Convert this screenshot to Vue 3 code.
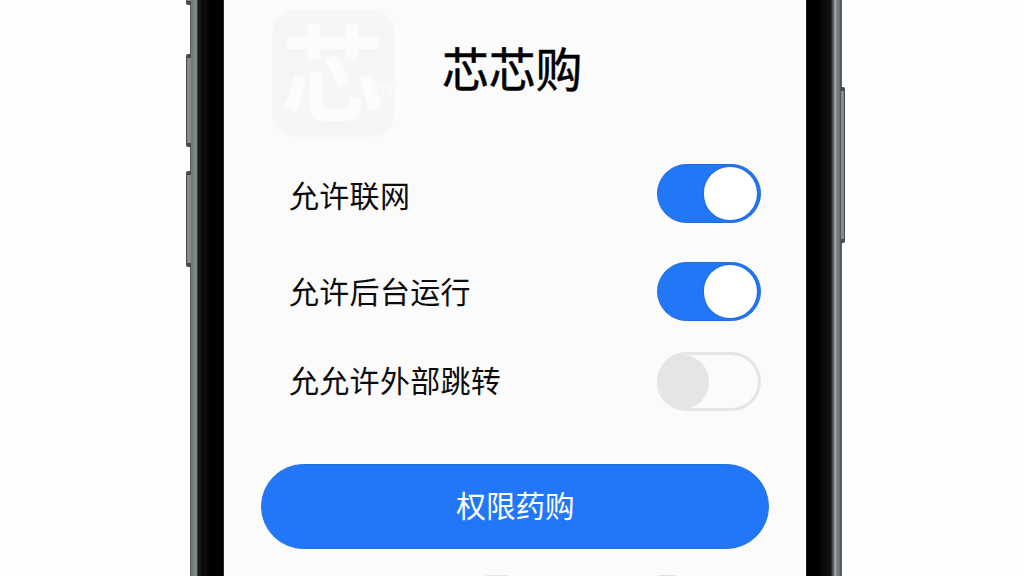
<script setup>
import { ref } from 'vue'

const permissions = ref([
  { label: '允许联网', on: true },
  { label: '允许后台运行', on: true },
  { label: '允允许外部跳转', on: false },
])
</script>

<template>
  <div class="stage">
    <div class="phone">
      <div class="rail rail-left"></div>
      <main class="screen">
        <header class="header">
          <div class="app-icon">
            <span class="app-glyph">芯</span>
            <svg class="app-mark" width="26" height="26" viewBox="0 0 26 26" fill="none" stroke="#fafafa" stroke-width="3">
              <path d="M0 9H24M5 2V22M13 4V20M20 5V18" />
            </svg>
          </div>
          <h1 class="title">芯芯购</h1>
        </header>
        <section class="list">
          <div v-for="item in permissions" :key="item.label" class="row">
            <span class="label">{{ item.label }}</span>
            <button class="toggle" :class="{ on: item.on }" @click="item.on = !item.on">
              <span class="knob"></span>
            </button>
          </div>
        </section>
        <button class="primary">权限药购</button>
        <div class="hints"><i></i><i></i></div>
      </main>
      <div class="rail rail-right"></div>
      <span class="side mute"></span>
      <span class="side vol-up"></span>
      <span class="side vol-down"></span>
      <span class="side power"></span>
    </div>
  </div>
</template>

<style>
html, body { background: #fefefe; overflow: hidden; }
</style>

<style scoped>
.stage {
  width: 1024px;
  height: 576px;
  display: flex;
  overflow: hidden;
  background: #fefefe;
  font-family: "Noto Sans CJK SC", "Noto Sans", sans-serif;
}
.phone {
  position: relative;
  display: flex;
  width: 652px;
  height: 576px;
  margin-left: 190px;
}
.rail-left {
  width: 34px;
  background: linear-gradient(90deg, #4b4f50 0, #72777a 1.5px, #7b8083 4px, #8c9194 6px, #5c6063 7px, #131415 8.5px, #1c1c1d 10px, #070707 12px, #0d0d0d 15px, #000 20px, #000 33px, #555 34px);
}
.rail-right {
  width: 36px;
  background: linear-gradient(90deg, #333 0, #000 1px, #000 13px, #0b0b0b 18px, #111 24px, #1b1b1c 25px, #55595b 27px, #9da1a4 29px, #a1a4a7 30px, #717579 31px, #777b7e 33px, #44494c 35px, #777 36px);
}
.screen {
  flex: none;
  display: flex;
  flex-direction: column;
  box-sizing: border-box;
  width: 582px;
  height: 576px;
  padding: 10px 37px 0;
  background: #fbfbfb;
}
.header {
  display: flex;
  height: 127px;
  padding-left: 11px;
}
.app-icon {
  position: relative;
  width: 123px;
  height: 127px;
  border-radius: 24px;
  background: #f6f6f6;
}
.app-glyph {
  position: absolute;
  left: 9px;
  top: 7px;
  font-size: 104px;
  line-height: 104px;
  font-weight: 700;
  color: #fcfcfc;
}
.app-mark { position: absolute; left: 98px; top: 67px; }
.title {
  margin: 22px 0 0 47px;
  font-size: 47px;
  line-height: 70px;
  font-weight: 400;
  letter-spacing: -0.2px;
  color: #000;
  -webkit-text-stroke: 0.5px #000;
}
.list {
  display: flex;
  flex-direction: column;
  padding: 26.5px 8px 0 28px;
}
.row {
  display: flex;
  align-items: center;
  justify-content: space-between;
  height: 60px;
}
.row + .row { margin-top: 38px; }
.row:last-child { margin-top: 30px; }
.label {
  font-size: 30px;
  line-height: 44px;
  letter-spacing: 0.3px;
  color: #0c0c0c;
}
.row:nth-child(2) .label { margin-bottom: 3px; }
.row:nth-child(3) .label { margin-bottom: 6px; }
.toggle {
  display: flex;
  align-items: center;
  box-sizing: border-box;
  width: 104px;
  height: 59.5px;
  padding: 0;
  border: 3px solid #e5e5e5;
  border-radius: 30px;
  background: #fbfbfb;
}
.toggle.on {
  justify-content: flex-end;
  padding-right: 3px;
  border: 1px solid #216ed9;
  background: #2277f7;
}
.knob {
  width: 54px;
  height: 54px;
  margin-left: -3px;
  border-radius: 26px 27px 27px 26px;
  background: #e5e5e5;
}
.toggle:not(.on) .knob { width: 52px; }
.on .knob {
  width: 53px;
  height: 53px;
  background: #fff;
  box-shadow: 0 0 2px #1456b9;
}
.primary {
  flex: none;
  box-sizing: border-box;
  width: 508px;
  height: 85px;
  margin: 52.5px 0 0;
  padding: 0 0 4px 1px;
  border: 1px solid #226fdc;
  border-radius: 43px;
  background: #2277f8;
  color: #fff;
  font-family: inherit;
  font-size: 29.6px;
  font-weight: 400;
}
.hints {
  display: flex;
  gap: 143px;
  margin: 26px 0 0 221px;
}
.hints i {
  width: 30px;
  height: 6px;
  border-radius: 16px 16px 0 0;
  background: #e6e6e5;
}
.hints i + i { width: 24px; background: #dfe3df; }
.side {
  position: absolute;
  left: -4px;
  box-sizing: border-box;
  width: 5px;
  border: solid #46494b;
  border-width: 4px 0 4px 1px;
  border-radius: 2px 0 0 2px;
  background: #878b8d;
}
.mute { top: -10px; height: 15px; }
.vol-up { top: 54px; height: 93px; }
.vol-down { top: 171px; height: 96px; }
.power {
  left: 651px;
  top: 87px;
  height: 156px;
  width: 4px;
  border-width: 4px 1px 4px 0;
  border-radius: 0 2px 2px 0;
}
</style>
